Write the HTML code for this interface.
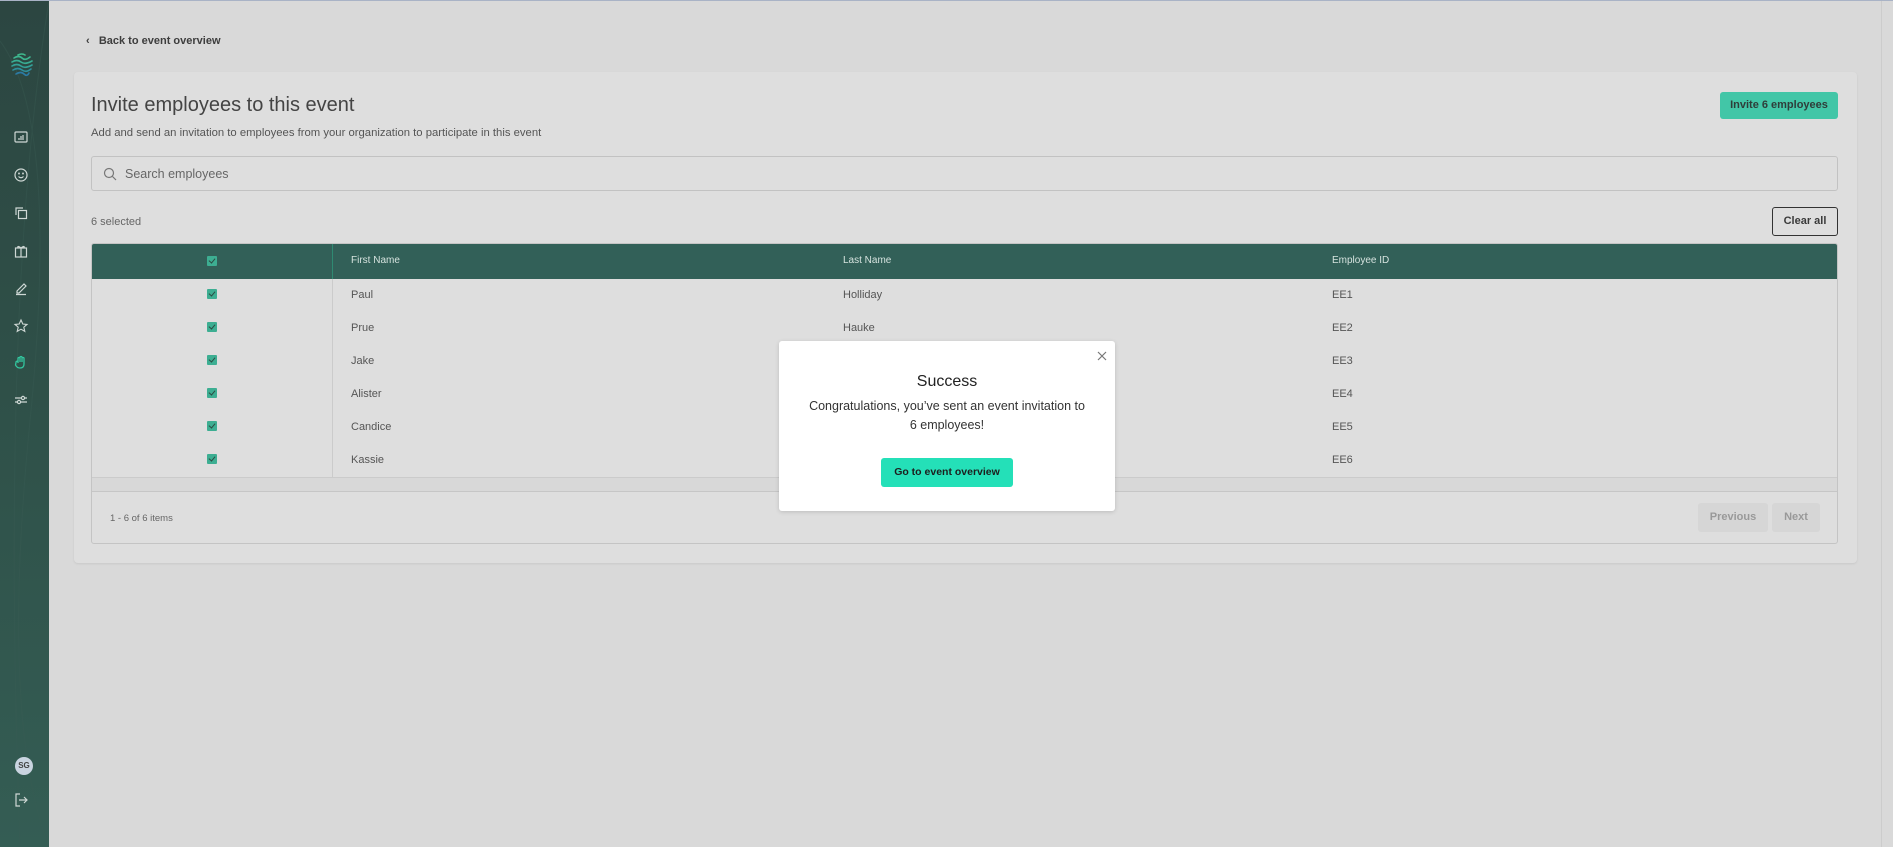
<!DOCTYPE html>
<html><head><meta charset="utf-8"><style>
*{box-sizing:border-box;margin:0;padding:0}
body{width:1893px;height:847px;background:#d9d9d9;font-family:"Liberation Sans",sans-serif;position:relative;overflow:hidden;color:#4a4a4a}
.topline{position:absolute;left:0;top:0;width:1893px;height:1px;background:#a9b3c6}
.side{position:absolute;left:0;top:1px;width:49px;height:846px;background:linear-gradient(180deg,#2c4641 0%,#2f5149 50%,#345d54 100%)}
.ico{position:absolute;left:13px;width:16px;height:16px}
.vline{position:absolute;left:1881px;top:1px;width:1px;height:846px;background:#cccccc}
.back{position:absolute;left:86px;top:35px;font-size:11px;font-weight:bold;color:#3d3d3d}
.card{position:absolute;left:74px;top:72px;width:1783px;height:491px;background:#dedede;border-radius:4px;box-shadow:0 1px 2px rgba(0,0,0,.08)}
.abs{position:absolute}
h1{position:absolute;left:91px;top:94px;font-size:20px;font-weight:normal;color:#444}
.sub{left:91px;top:127px;font-size:11.3px;color:#555}
.btn1{left:1720px;top:92px;width:118px;height:27px;background:#42c6a7;border-radius:3px;font-size:11px;font-weight:bold;color:#2f3d3a;text-align:center;line-height:27px}
.search{left:91px;top:156px;width:1747px;height:35px;border:1px solid #c2c2c2;border-radius:3px}
.search span{position:absolute;left:33px;top:10px;font-size:12.5px;color:#666}
.sel{left:91px;top:216px;font-size:11px;color:#666}
.clear{left:1772px;top:207px;width:66px;height:29px;border:1.5px solid #333;border-radius:3px;font-size:11px;font-weight:bold;text-align:center;line-height:26px;color:#3a3a3a}
.table{left:91px;top:243px;width:1747px;height:301px;border:1px solid #c4c4c4;border-radius:3px;overflow:hidden}
.thead{position:absolute;left:0;top:0;width:100%;height:35px;background:#326058}
.th{position:absolute;top:11px;font-size:10px;color:#d5e2de}
.cb{position:absolute;left:115px;width:10px;height:10px;background:#3dae92;border-radius:1px}
.cb:after{content:"";position:absolute;left:3px;top:1px;width:3px;height:5px;border:solid #2b4a42;border-width:0 1.3px 1.3px 0;transform:rotate(40deg)}
.td{position:absolute;font-size:11px;color:#555}
.colline{position:absolute;left:240px;top:0;width:1px;height:233px;background:#cbcbcb}
.col2{background:#2f8a72}
.band{position:absolute;left:0;top:233px;width:100%;height:15px;background:#d8d8d8;border-top:1px solid #cbcbcb;border-bottom:1px solid #c6c6c6}
.pg{position:absolute;top:259px;height:29px;background:#d6d6d6;border-radius:3px;font-size:11px;font-weight:bold;color:#999;text-align:center;line-height:29px}
.modal{position:absolute;left:779px;top:341px;width:336px;height:170px;background:#fff;border-radius:3px;box-shadow:0 1px 4px rgba(0,0,0,.15);text-align:center}
.modal .t{position:absolute;left:0;width:100%;top:32px;font-size:16px;color:#222}
.modal .b{position:absolute;left:0;width:100%;top:56px;font-size:12.5px;line-height:19px;color:#333}
.modal .go{position:absolute;left:102px;top:117px;width:132px;height:29px;background:#24e0b8;border-radius:3px;font-size:10.5px;font-weight:bold;color:#1d1d1d;line-height:29px}
</style></head><body>
<div class="topline"></div>
<div class="side">
<svg class="abs" style="left:0;top:0" width="49" height="846"><g fill="none" stroke="#3a5c54" stroke-width="1" opacity=".4"><path d="M0 40 Q60 120 30 420 T49 846"/><path d="M49 0 Q0 300 20 846"/></g></svg>
<svg class="abs" style="left:11px;top:52px" width="22" height="24" viewBox="0 0 22 24"><g fill="none" stroke-width="1.6" stroke-linecap="round"><path d="M7 2 Q11 0 14 2" stroke="#3fb88c"/><path d="M3 5 Q8 2 11 5 T19 4" stroke="#3db58f"/><path d="M1 9 Q6 6 10 9 T21 8" stroke="#38ad93"/><path d="M1 13 Q6 10 10 13 T21 12" stroke="#33a097"/><path d="M2 17 Q7 14 11 17 T20 16" stroke="#2f8f9c"/><path d="M5 21 Q10 18 13 21 T18 20" stroke="#2b7aa4"/></g></svg>
<svg class="ico" style="top:128px" viewBox="0 0 16 16" fill="none" stroke="#cfd8d5" stroke-width="1.2"><rect x="2" y="3" width="12" height="10" rx="1"/><path d="M6 11V9M8 11V7M10 11V6"/></svg>
<svg class="ico" style="top:166px" viewBox="0 0 16 16" fill="none" stroke="#cfd8d5" stroke-width="1.2"><circle cx="8" cy="8" r="6"/><path d="M5.5 9.5Q8 12 10.5 9.5"/><circle cx="6" cy="6.5" r=".4"/><circle cx="10" cy="6.5" r=".4"/></svg>
<svg class="ico" style="top:204px" viewBox="0 0 16 16" fill="none" stroke="#cfd8d5" stroke-width="1.2"><path d="M3 10V3h7"/><rect x="5.5" y="5.5" width="8" height="8"/></svg>
<svg class="ico" style="top:242px" viewBox="0 0 16 16" fill="none" stroke="#cfd8d5" stroke-width="1.2"><rect x="2.5" y="5" width="11" height="9"/><path d="M8 5v9M5 5Q4 2 8 5Q12 2 11 5"/></svg>
<svg class="ico" style="top:279px" viewBox="0 0 16 16" fill="none" stroke="#cfd8d5" stroke-width="1.2"><path d="M4 11l7-7 2 2-7 7H4z M3 14.5h10"/></svg>
<svg class="ico" style="top:317px" viewBox="0 0 16 16" fill="none" stroke="#cfd8d5" stroke-width="1.1"><path d="M8 2l1.8 4 4.2.4-3.2 2.8 1 4.2L8 11.2 4.2 13.4l1-4.2L2 6.4l4.2-.4z"/></svg>
<svg class="ico" style="top:353px" viewBox="0 0 16 16" fill="none" stroke="#32c69f" stroke-width="1.3"><path d="M5 9V4.5a1 1 0 012 0V8V3.5a1 1 0 012 0V8V4.5a1 1 0 012 0V10q0 4-4 4-3 0-4.5-3L3 8.5a1 1 0 012-.5z"/></svg>
<svg class="ico" style="top:391px" viewBox="0 0 16 16" fill="none" stroke="#cfd8d5" stroke-width="1.2"><path d="M2 6h6M12 6h2M2 10h2M8 10h6"/><circle cx="10" cy="6" r="1.6"/><circle cx="6" cy="10" r="1.6"/></svg>
<div class="abs" style="left:15px;top:756px;width:18px;height:18px;border-radius:50%;background:#c9d4e0;font-size:8px;font-weight:bold;color:#444;text-align:center;line-height:18px">SG</div>
<svg class="ico" style="top:791px" viewBox="0 0 16 16" fill="none" stroke="#cfd8d5" stroke-width="1.2"><path d="M7 2H3v12h4M6 8h8M11 5l3 3-3 3"/></svg>
</div>
<div class="vline"></div>
<div class="back">‹&nbsp;&nbsp;&nbsp;Back to event overview</div>
<div class="card"></div>
<h1>Invite employees to this event</h1>
<div class="abs sub">Add and send an invitation to employees from your organization to participate in this event</div>
<div class="abs btn1">Invite 6 employees</div>
<div class="abs search"><svg class="abs" style="left:11px;top:10px" width="14" height="14" viewBox="0 0 14 14" fill="none" stroke="#777" stroke-width="1.2"><circle cx="6" cy="6" r="4.5"/><path d="M9.5 9.5L13 13"/></svg><span>Search employees</span></div>
<div class="abs sel">6 selected</div>
<div class="abs clear">Clear all</div>
<div class="abs table">
<div class="thead"><div class="cb" style="top:12px"></div><div class="colline col2" style="height:35px"></div>
<div class="th" style="left:259px">First Name</div><div class="th" style="left:751px">Last Name</div><div class="th" style="left:1240px">Employee ID</div></div>
<div class="colline" style="top:35px;height:198px"></div>
<div class="cb" style="top:45px"></div><div class="td" style="left:259px;top:45px">Paul</div><div class="td" style="left:751px;top:45px">Holliday</div><div class="td" style="left:1240px;top:45px">EE1</div>
<div class="cb" style="top:78px"></div><div class="td" style="left:259px;top:78px">Prue</div><div class="td" style="left:751px;top:78px">Hauke</div><div class="td" style="left:1240px;top:78px">EE2</div>
<div class="cb" style="top:111px"></div><div class="td" style="left:259px;top:111px">Jake</div><div class="td" style="left:1240px;top:111px">EE3</div>
<div class="cb" style="top:144px"></div><div class="td" style="left:259px;top:144px">Alister</div><div class="td" style="left:1240px;top:144px">EE4</div>
<div class="cb" style="top:177px"></div><div class="td" style="left:259px;top:177px">Candice</div><div class="td" style="left:1240px;top:177px">EE5</div>
<div class="cb" style="top:210px"></div><div class="td" style="left:259px;top:210px">Kassie</div><div class="td" style="left:1240px;top:210px">EE6</div>
<div class="band"></div>
<div class="td" style="left:18px;top:269px;font-size:9.5px;color:#666">1 - 6 of 6 items</div>
<div class="pg" style="left:1606px;width:70px">Previous</div>
<div class="pg" style="left:1680px;width:48px">Next</div>
</div>
<div class="modal">
<svg class="abs" style="left:318px;top:10px" width="10" height="10" viewBox="0 0 10 10" stroke="#777" stroke-width="1.2"><path d="M1 1l8 8M9 1L1 9"/></svg>
<div class="t">Success</div>
<div class="b">Congratulations, you’ve sent an event invitation to<br>6 employees!</div>
<div class="go">Go to event overview</div>
</div>
</body></html>
